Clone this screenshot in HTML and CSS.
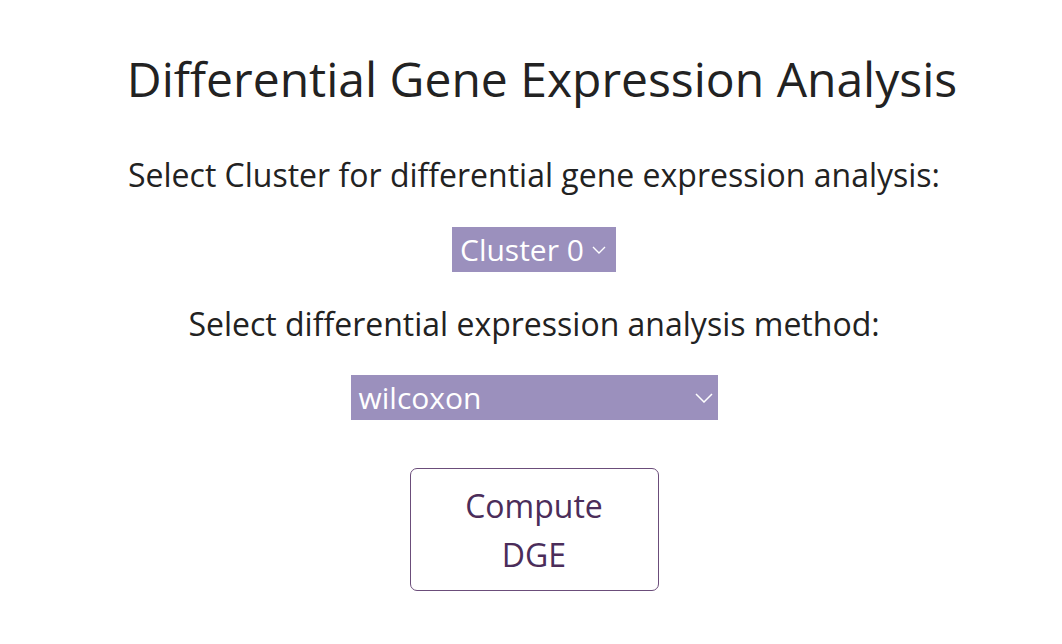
FILE: index.html
```html
<!DOCTYPE html>
<html>
<head>
<meta charset="utf-8">
<link rel="stylesheet" href="styles.css">
</head>
<body>
<main class="panel">
  <h1 class="title">Differential Gene Expression Analysis</h1>
  <p class="label label-first">Select Cluster for differential gene expression analysis:</p>
  <div class="select select-cluster">
    <span class="select-text">Cluster 0</span>
    <svg class="chev" width="14" height="8" viewBox="0 0 14 8"><path d="M1 1 L7 7 L13 1" fill="none" stroke="#fff" stroke-width="1.4"/></svg>
  </div>
  <p class="label">Select differential expression analysis method:</p>
  <div class="select select-method">
    <span class="select-text">wilcoxon</span>
    <svg class="chev" width="18" height="10" viewBox="0 0 18 10"><path d="M1 1 L9 9 L17 1" fill="none" stroke="#fff" stroke-width="1.5"/></svg>
  </div>
  <button class="compute">Compute<br>DGE</button>
</main>
</body>
</html>
```
FILE: styles.css
```css
html, body {
  margin: 0;
  padding: 0;
  background: #fff;
}
body {
  font-family: "Open Sans", "Noto Sans", sans-serif;
  color: #222;
}
.panel {
  display: flex;
  flex-direction: column;
  align-items: center;
  padding-top: 47px;
  padding-left: 6px;
}
.title {
  margin: 0;
  padding-left: 16px;
  font-weight: 400;
  font-size: 48px;
  line-height: 64px;
  color: #222;
}
.label {
  margin: 30px 0 0;
  font-size: 32px;
  line-height: 44px;
}
.label-first {
  margin-top: 42px;
}
.select {
  display: flex;
  align-items: center;
  background: #9b90bd;
  color: #fff;
  height: 45px;
  box-sizing: border-box;
  font-size: 30px;
  margin-top: 30px;
}
.select-cluster {
  width: 164px;
  padding: 0 10px 0 8px;
  gap: 8px;
}
.select-method {
  width: 367px;
  padding: 0 5px 0 8px;
  justify-content: space-between;
  margin-top: 29px;
}
.compute {
  margin-top: 48px;
  width: 249px;
  height: 123px;
  border: 1.5px solid #6b4d7a;
  border-radius: 7px;
  background: #fff;
  color: #4b2d5a;
  font-family: "Open Sans", "Noto Sans", sans-serif;
  font-size: 32px;
  line-height: 49px;
  padding: 0;
}
```
